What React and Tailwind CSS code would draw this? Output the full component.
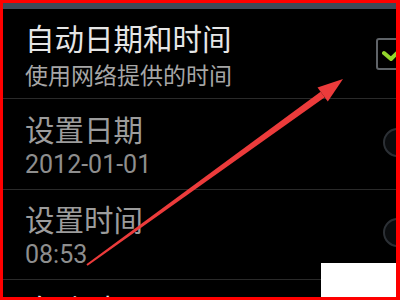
import React from 'react';

const cjk = { fontFamily: '"Noto Sans CJK SC", "Noto Sans", sans-serif' };
const num = { fontFamily: 'Roboto, "Noto Sans CJK SC", sans-serif' };

const Checkbox = () => (
  <div className="w-[32px] h-[32px] shrink-0 border-2 border-[#5f6368] rounded-[3px] flex items-center justify-start pl-[4px]">
    <svg width="22" height="18" viewBox="0 0 22 18">
      <path d="M2 8 L9 14 L20 3" fill="none" stroke="#93d62c" strokeWidth="4" strokeLinecap="round" strokeLinejoin="round" />
    </svg>
  </div>
);

const Spinner = () => (
  <div className="w-[29px] h-[29px] shrink-0 rounded-full border-2 border-[#2c3035] bg-[#0b0d0f] flex flex-col items-center justify-center gap-[4px]">
    <span className="w-[3px] h-[3px] bg-[#3f444a]" />
    <span className="w-[3px] h-[3px] bg-[#3f444a]" />
  </div>
);

const SettingRow = ({ title, sub, dim, right, subNum }) => (
  <div className="flex items-start justify-between border-b border-[#2a2a2a] pl-[22px] pt-[10px] pb-[5px] h-[90px]">
    <div className="flex flex-col">
      <span className={`text-[29.5px] leading-[36px] ${dim ? 'text-[#9c9c9c]' : 'text-[#e6e6e6]'}`} style={cjk}>
        {title}
      </span>
      <span
        className={`leading-[38px] ${subNum ? 'text-[25px]' : 'text-[23px]'} ${dim ? 'text-[#8e8e8e]' : 'text-[#a6a6a6]'}`}
        style={subNum ? num : cjk}
      >
        {sub}
      </span>
    </div>
    {right}
  </div>
);

export default function App() {
  return (
    <div className="relative w-[400px] h-[300px] overflow-hidden bg-black border-t-[3px] border-l-[3px] border-r-[4px] border-b-[3px] border-[#ff0000]">
      <div className="h-[6px] bg-[#3e4a59]" />
      <div className="overflow-hidden">
        <SettingRow
          title="自动日期和时间"
          sub="使用网络提供的时间"
          right={<div className="mt-[19px] -mr-[12px]"><Checkbox /></div>}
        />
        <div className="h-px" />
        <SettingRow
          title="设置日期"
          sub="2012-01-01"
          dim
          subNum
          right={<div className="mt-[18px] -mr-[16px]"><Spinner /></div>}
        />
        <SettingRow
          title="设置时间"
          sub="08:53"
          dim
          subNum
          right={<div className="mt-[18px] -mr-[16px]"><Spinner /></div>}
        />
        <SettingRow title="自动时区" sub="使用网络提供的时区" />
      </div>

      {/* annotation arrow */}
      <svg className="absolute left-[-3px] top-[-3px] pointer-events-none" width="400" height="300" viewBox="0 0 400 300">
        <polygon points="87.6,265.8 86.4,264.2 320.6,91.7 324.8,97.3" fill="#ec3b3b" />
        <polygon points="343,79 317.5,87.5 327.8,101.5" fill="#ec3b3b" />
      </svg>

      {/* white patch bottom-right */}
      <div className="absolute left-[318px] top-[260px] w-[80px] h-[40px] bg-white" />
    </div>
  );
}
